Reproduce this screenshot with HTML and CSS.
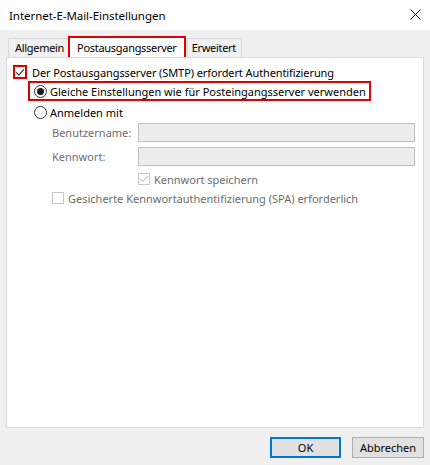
FILE: index.html
```html
<!DOCTYPE html>
<html lang="de">
<head>
<meta charset="utf-8">
<link rel="stylesheet" href="styles.css">
</head>
<body>
<div class="window">
  <div class="titlebar">
    <span class="title">Internet-E-Mail-Einstellungen</span>
    <svg class="close" width="11" height="11" viewBox="0 0 11 11"><path d="M0.5 0.5L10.5 10.5M10.5 0.5L0.5 10.5" stroke="#111" stroke-width="1" fill="none"/></svg>
  </div>
  <div class="body">
    <div class="tabs">
      <div class="tab first">Allgemein</div>
      <div class="tab active">Postausgangsserver</div>
      <div class="tab last">Erweitert</div>
    </div>
    <div class="panel">
      <div class="row checkrow">
        <span class="check hl"><svg width="11" height="11" viewBox="0 0 11 11"><path d="M1.3 5.3L4.2 8.3L9.8 2" stroke="#222" stroke-width="1.2" fill="none"/></svg></span>
        <span class="label">Der Postausgangsserver (SMTP) erfordert Authentifizierung</span>
      </div>
      <div class="row radiorow">
        <span class="hl-radio">
          <span class="radio"><span class="dot"></span></span>
          <span class="label">Gleiche Einstellungen wie für Posteingangsserver verwenden</span>
        </span>
      </div>
      <div class="row radiorow2">
        <span class="radio"></span>
        <span class="label">Anmelden mit</span>
      </div>
      <div class="field">
        <span class="flabel">Benutzername:</span>
        <span class="input"></span>
      </div>
      <div class="field second">
        <span class="flabel">Kennwort:</span>
        <span class="input"></span>
      </div>
      <div class="row save">
        <span class="check disabled"><svg width="10" height="10" viewBox="0 0 11 11"><path d="M1.3 5.3L4.2 8.3L9.8 2" stroke="#b0b0b0" stroke-width="1.1" fill="none"/></svg></span>
        <span class="label dis">Kennwort speichern</span>
      </div>
      <div class="row spa">
        <span class="check disabled"></span>
        <span class="label dis">Gesicherte Kennwortauthentifizierung (SPA) erforderlich</span>
      </div>
    </div>
    <div class="buttons">
      <button class="btn default">OK</button>
      <button class="btn cancel">Abbrechen</button>
    </div>
  </div>
</div>
</body>
</html>
```
FILE: styles.css
```css
html, body { margin: 0; padding: 0; }
body {
  width: 430px; height: 465px; overflow: hidden;
  font-family: "Noto Sans", "Open Sans", sans-serif;
  font-size: 11px; color: #000;
}
.window { width: 430px; height: 465px; display: flex; flex-direction: column; }
.titlebar {
  height: 30px; flex: none; background: #fff; display: flex; align-items: center;
  justify-content: space-between; padding: 0 9px 0 9px; box-sizing: border-box;
}
.title { font-size: 11.5px; letter-spacing: -0.05px; }
.close { display: block; margin-top: -1px; }
.body { flex: 1; background: #f0f0f0; padding: 6px 6px 0 6px; display: flex; flex-direction: column; }
.tabs { display: flex; align-items: flex-end; height: 21px; padding-left: 2px; }
.tab {
  height: 19px; line-height: 18px; box-sizing: border-box; letter-spacing: -0.3px;
  border: 1px solid #d9d9d9; border-bottom: none; background: #f0f0f0;
}
.tab.first { padding: 0 4px 0 6px; }
.tab.active {
  height: 21px; line-height: 19px; background: #fff; border: 2px solid #e00000;
  border-bottom: none; padding: 0 7px 0 7px; margin-left: -1px;
}
.tab.last { padding: 0 5px 0 4px; margin-left: 1px; }
.panel {
  height: 371px; flex: none; background: #fff; border: 1px solid #d9d9d9; box-sizing: border-box;
  padding: 7px 0 0 6px; display: flex; flex-direction: column;
}
.row { display: flex; align-items: center; }
.label { white-space: nowrap; }
.checkrow .label { letter-spacing: -0.1px; }
.dis { color: #6d6d6d; }
.checkrow { height: 14px; }
.check {
  width: 13px; height: 13px; box-sizing: border-box; border: 1px solid #333;
  background: #fff; display: flex; align-items: center; justify-content: center; flex: none;
}
.check.hl { width: 14px; height: 14px; border: 2px solid #e00000; margin-right: 5px; }
.check.disabled { border-color: #c6c6c6; width: 12px; height: 12px; margin-right: 4px; }
.radiorow { margin-top: 2px; margin-left: 15px; }
.hl-radio {
  border: 2px solid #e00000; display: flex; align-items: center;
  padding: 0 3px 0 4px; height: 20px; box-sizing: border-box;
}
.radio {
  width: 13px; height: 13px; border: 1px solid #333; border-radius: 50%; box-sizing: border-box;
  display: flex; align-items: center; justify-content: center; margin-right: 3px; background: #fff; flex: none;
}
.dot { width: 7px; height: 7px; border-radius: 50%; background: #1a1a1a; }
.radiorow2 { margin-left: 21px; margin-top: 3px; height: 16px; }
.field { display: flex; align-items: center; margin-top: 3px; height: 19px; }
.field.second { margin-top: 5px; }
.flabel { width: 86px; padding-left: 39px; color: #6d6d6d; flex: none; white-space: nowrap; }
.input {
  width: 277px; height: 19px; box-sizing: border-box; background: #ededed;
  border: 1px solid #c0c0c0;
}
.save { margin-left: 125px; margin-top: 7px; height: 12px; }
.spa { margin-left: 39px; margin-top: 7px; height: 12px; }
.buttons { display: flex; justify-content: flex-end; gap: 11px; padding: 9px 0 0 0; }
.btn {
  font-family: inherit; font-size: 11px; height: 21px; padding: 0; margin: 0;
  background: #e1e1e1; border: 1px solid #adadad; color: #000; box-sizing: border-box;
}
.btn.default { width: 71px; border: 2px solid #0078d7; }
.btn.cancel { width: 72px; }
```
